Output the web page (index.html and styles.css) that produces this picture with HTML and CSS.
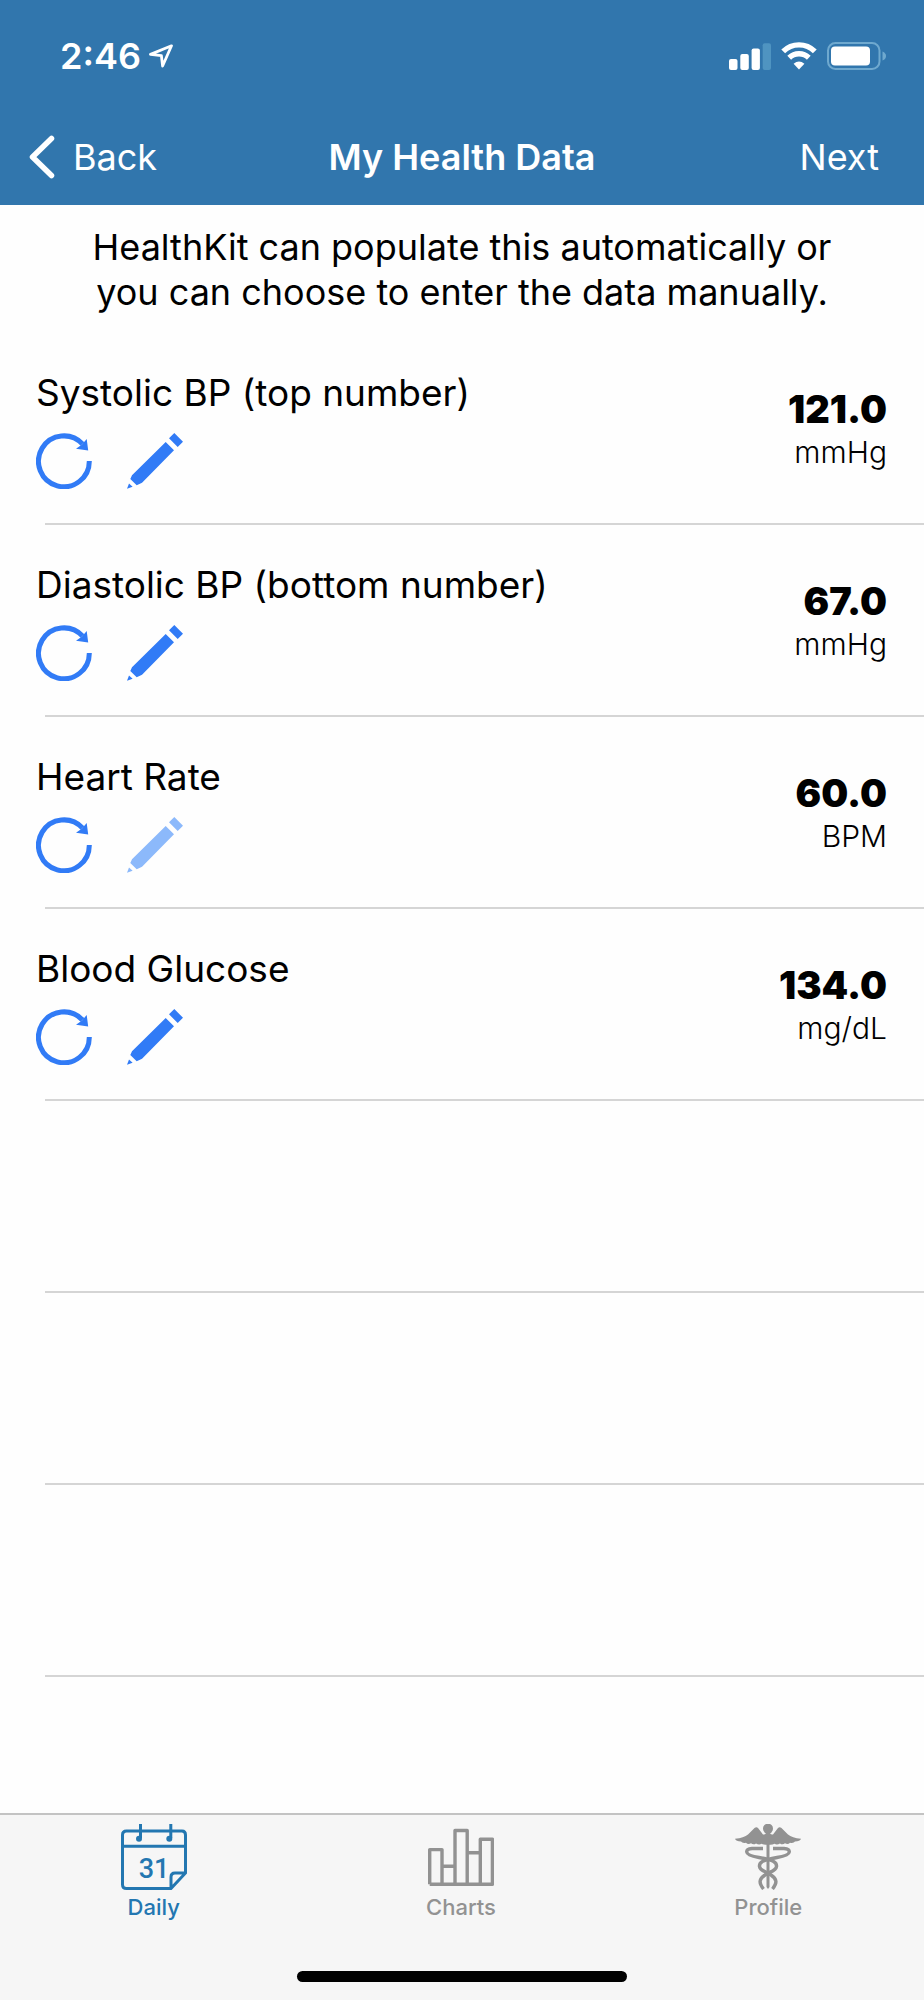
FILE: index.html
```html
<!DOCTYPE html>
<html lang="en">
<head>
    <meta charset="UTF-8">
    <meta name="viewport" content="width=device-width, initial-scale=1.0">
    <title>My Health Data</title>
    <link rel="stylesheet" href="styles.css">
</head>
<body>
    <!-- Shared icons -->
    <svg class="sprite" aria-hidden="true">
        <symbol id="refresh" viewBox="0 0 56 56">
            <path d="M53.3 28A25.4 25.4 0 1 1 46.5 11" fill="none" stroke="currentColor" stroke-width="5"/>
            <path d="M50.7 6L52.2 17.4L40 15.7L46 11.5Z" fill="currentColor"/>
        </symbol>
        <symbol id="pencil" viewBox="0 0 56 56">
            <path d="M47.3 0L56 8.7L50.7 14L42 5.3ZM38.7 9L47 17.3L16 48.7Q15 49.8 14 50.3L9.7 52.3L3.3 46L5 42.3ZM2 50.5L5.6 53.8L0 55.8Z" fill="currentColor"/>
        </symbol>
    </svg>

    <header class="header">
        <div class="status-bar">
            <div class="clock">
                <span>2:46</span>
                <svg width="24" height="24" viewBox="0 0 24 24" fill="none" stroke="currentColor" stroke-width="2.8" stroke-linejoin="round">
                    <path d="M22.5 1.8L1.5 10.4L12.4 11.6L13.6 22Z"/>
                </svg>
            </div>
            <div class="indicators">
                <svg width="42" height="28" viewBox="0 0 42 28" fill="currentColor">
                    <rect x="0" y="17" width="8.5" height="11" rx="2"/>
                    <rect x="11.3" y="12" width="8.5" height="16" rx="2"/>
                    <rect x="22.6" y="6.5" width="8.3" height="21.5" rx="2"/>
                    <rect class="dim" x="33.7" y="1.3" width="8.3" height="26.7" rx="2"/>
                </svg>
                <svg width="36" height="28" viewBox="0 0 36 28">
                    <path d="M2.2 9.4A22.4 22.4 0 0 1 33.8 9.4M8.2 15.8A14 14 0 0 1 27.8 15.8" fill="none" stroke="currentColor" stroke-width="5.4"/>
                    <path d="M18 27.5L12.6 21.8Q18 17.4 23.4 21.8Z" fill="currentColor"/>
                </svg>
                <svg width="60" height="28" viewBox="0 0 60 28">
                    <rect class="battery-case" x="1" y="1" width="51.5" height="26" rx="7.5" fill="none" stroke-width="2"/>
                    <rect x="4" y="4.5" width="39" height="19" rx="4" fill="currentColor"/>
                    <path class="battery-tip" d="M55.5 9.5Q59 11 59 14T55.5 18.5Z"/>
                </svg>
            </div>
        </div>
        <nav class="nav-bar">
            <button type="button" class="nav-btn back-btn">
                <svg width="26" height="44" viewBox="0 0 26 44" fill="none" stroke="currentColor" stroke-width="5.5" stroke-linecap="round" stroke-linejoin="round">
                    <path d="M22.5 3.5L3.5 22L22.5 40.5"/>
                </svg>
                Back
            </button>
            <h1>My Health Data</h1>
            <button type="button" class="nav-btn next-btn">Next</button>
        </nav>
    </header>

    <main class="content">
        <p class="intro">HealthKit can populate this automatically or you can choose to enter the data manually.</p>

        <ul class="data-list">
            <li class="row">
                <div class="row-info">
                    <h2>Systolic BP (top number)</h2>
                    <div class="actions">
                        <button type="button" class="icon-btn" aria-label="Refresh systolic BP"><svg><use href="#refresh"/></svg></button>
                        <button type="button" class="icon-btn" aria-label="Edit systolic BP"><svg><use href="#pencil"/></svg></button>
                    </div>
                </div>
                <div class="reading">
                    <strong>121.0</strong>
                    <span>mmHg</span>
                </div>
            </li>
            <li class="row">
                <div class="row-info">
                    <h2>Diastolic BP (bottom number)</h2>
                    <div class="actions">
                        <button type="button" class="icon-btn" aria-label="Refresh diastolic BP"><svg><use href="#refresh"/></svg></button>
                        <button type="button" class="icon-btn" aria-label="Edit diastolic BP"><svg><use href="#pencil"/></svg></button>
                    </div>
                </div>
                <div class="reading">
                    <strong>67.0</strong>
                    <span>mmHg</span>
                </div>
            </li>
            <li class="row">
                <div class="row-info">
                    <h2>Heart Rate</h2>
                    <div class="actions">
                        <button type="button" class="icon-btn" aria-label="Refresh heart rate"><svg><use href="#refresh"/></svg></button>
                        <button type="button" class="icon-btn" aria-label="Edit heart rate" disabled><svg><use href="#pencil"/></svg></button>
                    </div>
                </div>
                <div class="reading">
                    <strong>60.0</strong>
                    <span>BPM</span>
                </div>
            </li>
            <li class="row">
                <div class="row-info">
                    <h2>Blood Glucose</h2>
                    <div class="actions">
                        <button type="button" class="icon-btn" aria-label="Refresh blood glucose"><svg><use href="#refresh"/></svg></button>
                        <button type="button" class="icon-btn" aria-label="Edit blood glucose"><svg><use href="#pencil"/></svg></button>
                    </div>
                </div>
                <div class="reading">
                    <strong>134.0</strong>
                    <span>mg/dL</span>
                </div>
            </li>
            <li class="row"></li>
            <li class="row"></li>
            <li class="row"></li>
        </ul>
    </main>

    <footer class="tab-bar">
        <nav class="tabs">
            <a href="#daily" class="tab active">
                <svg viewBox="0 0 66 66" fill="none" stroke="currentColor" stroke-width="3">
                    <path d="M64.5 49V11Q64.5 7 61 7H5.5Q1.5 7 1.5 11V60.5Q1.5 64.5 5.5 64.5H50L64.5 49H54Q50 49 50 53V64.5M1.5 22.3H65M19.5 0V14M49.8 0V14"/>
                    <g fill="currentColor" stroke="none">
                        <circle cx="18" cy="14.8" r="3"/>
                        <circle cx="48.3" cy="14.8" r="3"/>
                        <text class="cal-day" x="33" y="54" text-anchor="middle">31</text>
                    </g>
                </svg>
                Daily
            </a>
            <a href="#charts" class="tab">
                <svg viewBox="0 0 66 66" fill="none" stroke="currentColor" stroke-width="3.4" stroke-linejoin="round">
                    <path d="M1.7 60.2V25.6H14V60.2M27 60.2V6.5H39.2V60.2M52.3 60.2V15.2H64.4V60.2ZM1.7 60.2H64.4M14 42.3H27M39.2 28.8H52.3"/>
                </svg>
                Charts
            </a>
            <a href="#profile" class="tab">
                <svg viewBox="0 0 66 66" fill="currentColor">
                    <circle cx="33" cy="4.6" r="5"/>
                    <path d="M31 9L35 9Q36 11 38 10.5L43 4Q44.5 2.5 46.5 4L53 10.5Q57 14 66 14.8Q65 17.5 60 17.5Q58.5 19.6 55 18.7Q53 20.8 50 19.3Q47.5 21.3 45 19.5Q42 21.3 39.5 19.8Q36.5 21.3 33 20.5Q29.5 21.3 26.5 19.8Q24 21.3 21 19.5Q18.5 21.3 16 19.3Q13 20.8 11 18.7Q7.5 19.6 6 17.5Q1 17.5 0 14.8Q9 14 13 10.5L19.5 4Q21.5 2.5 23 4L28 10.5Q30 11 31 9Z"/>
                    <path d="M31.5 18H34.5V63L33 65L31.5 63Z"/>
                    <g fill="none" stroke="currentColor" stroke-width="3.4">
                        <path d="M28 24.5H17Q11.5 25 11.7 28Q12 31.5 24 33.5C38 36 42 38 41.5 42.5C41 47 35 47.5 30 51C24 55 23.5 59 28.5 65"/>
                        <path d="M38 24.5H49Q54.5 25 54.3 28Q54 31.5 42 33.5C28 36 24 38 24.5 42.5C25 47 31 47.5 36 51C42 55 42.5 59 37.5 65"/>
                    </g>
                </svg>
                Profile
            </a>
        </nav>
        <div class="home-indicator"></div>
    </footer>
</body>
</html>
```
FILE: styles.css
```css
:root {
    --header-color: #3176ad;
    --accent-color: #317bf6;
    --disabled-color: #8cb9fb;
    --tab-active: #2377b1;
    --tab-color: #929292;
    --line-color: #d5d5d5;
}

* {
    margin: 0;
    padding: 0;
    box-sizing: border-box;
}

body {
    display: flex;
    flex-direction: column;
    min-height: 100vh;
    background-color: #fefefe;
    color: #000;
    font-family: Inter, "Liberation Sans", sans-serif;
    font-size: 36px;
    line-height: 45px;
}

button {
    border: none;
    background: none;
    color: inherit;
    font: inherit;
    cursor: pointer;
}

.sprite {
    display: none;
}

/* Header */
.header {
    background-color: var(--header-color);
    color: white;
}

.status-bar {
    display: flex;
    justify-content: space-between;
    align-items: center;
    height: 112px;
    padding: 0 37px 0 60px;
}

.clock {
    display: flex;
    align-items: center;
    gap: 8px;
    font-weight: 600;
}

.indicators {
    display: flex;
    align-items: center;
    gap: 10px;
}

.dim {
    fill: #4f94c1;
}

.battery-case {
    stroke: #6fa9cf;
}

.battery-tip {
    fill: #6fa9cf;
}

.nav-bar {
    display: grid;
    grid-template-columns: 1fr auto 1fr;
    align-items: center;
    height: 93px;
    padding: 0 45px 3px 29px;
}

.nav-btn {
    display: flex;
    align-items: center;
    gap: 18px;
}

.next-btn {
    justify-self: end;
}

h1 {
    margin-left: 16px;
    font-size: 36px;
    font-weight: 600;
}

/* Content */
.content {
    flex: 1;
}

.intro {
    max-width: 800px;
    margin: 0 auto;
    padding: 20px 20px 18px;
    text-align: center;
}

.data-list {
    padding-left: 45px;
    list-style: none;
}

.row {
    display: flex;
    justify-content: space-between;
    height: 192px;
    padding: 37px 37px 0 0;
    border-bottom: 2px solid var(--line-color);
}

.row-info {
    margin-left: -9px;
}

h2 {
    font-size: 37px;
    font-weight: 400;
}

.actions {
    display: flex;
    gap: 35px;
    margin-top: 18px;
}

.icon-btn {
    width: 56px;
    height: 56px;
    color: var(--accent-color);
}

.icon-btn:disabled {
    color: var(--disabled-color);
    cursor: default;
}

.icon-btn svg {
    display: block;
    width: 100%;
    height: 100%;
}

.reading {
    display: flex;
    flex-direction: column;
    align-items: flex-end;
    padding-top: 17px;
}

.reading strong {
    font-size: 38px;
    font-weight: 900;
}

.reading span {
    font-size: 30px;
    font-weight: 300;
    line-height: 40px;
}

/* Tab bar */
.tab-bar {
    height: 187px;
    padding-top: 9px;
    border-top: 2px solid #c3c3c3;
    background-color: #f6f6f6;
}

.tabs {
    display: grid;
    grid-template-columns: repeat(3, 1fr);
    padding-right: 2px;
}

.tab {
    display: flex;
    flex-direction: column;
    align-items: center;
    color: var(--tab-color);
    font-size: 22px;
    font-weight: 500;
    line-height: 34px;
    text-decoration: none;
}

.tab.active {
    color: var(--tab-active);
}

.tab svg {
    width: 66px;
    height: 66px;
}

.cal-day {
    font-family: Roboto, sans-serif;
    font-size: 27px;
    font-weight: 500;
}

.home-indicator {
    width: 330px;
    height: 11px;
    margin: 47px auto 0;
    border-radius: 6px;
    background-color: #000;
}
```
